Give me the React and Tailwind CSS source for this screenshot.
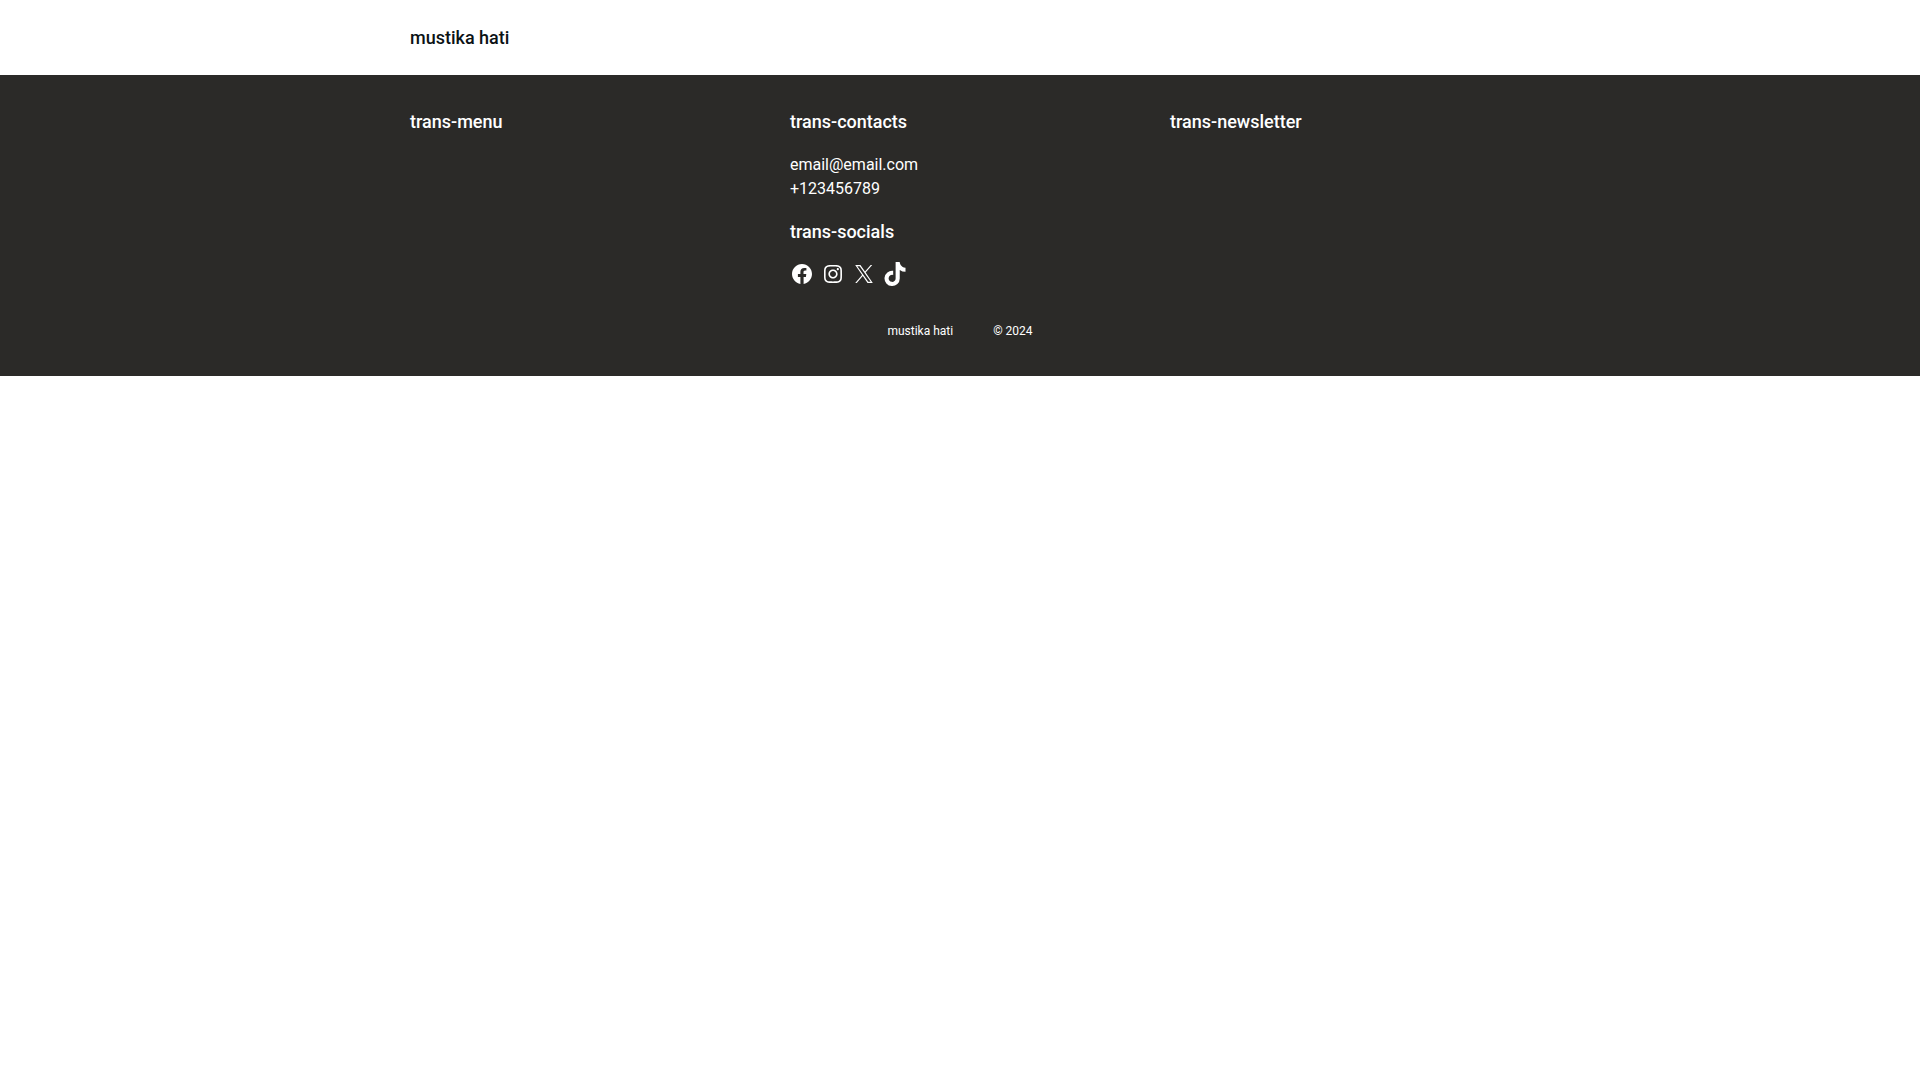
const ICONS = [
  {
    name: 'Facebook',
    viewBox: '0 0 24 24',
    size: 'size-6',
    path: 'M12 2C6.5 2 2 6.5 2 12c0 5 3.7 9.1 8.4 9.9v-7H7.9V12h2.5V9.8c0-2.5 1.5-3.9 3.8-3.9 1.1 0 2.2.2 2.2.2v2.5h-1.3c-1.2 0-1.6.8-1.6 1.6V12h2.8l-.4 2.9h-2.3v7C18.3 21.1 22 17 22 12c0-5.5-4.5-10-10-10z',
  },
  {
    name: 'Instagram',
    viewBox: '0 0 24 24',
    size: 'size-6',
    path: 'M12,4.622c2.403,0,2.688,0.009,3.637,0.052c0.877,0.04,1.354,0.187,1.671,0.31c0.42,0.163,0.72,0.358,1.035,0.673 c0.315,0.315,0.51,0.615,0.673,1.035c0.123,0.317,0.27,0.794,0.31,1.671c0.043,0.949,0.052,1.234,0.052,3.637 s-0.009,2.688-0.052,3.637c-0.04,0.877-0.187,1.354-0.31,1.671c-0.163,0.42-0.358,0.72-0.673,1.035 c-0.315,0.315-0.615,0.51-1.035,0.673c-0.317,0.123-0.794,0.27-1.671,0.31c-0.949,0.043-1.233,0.052-3.637,0.052 s-2.688-0.009-3.637-0.052c-0.877-0.04-1.354-0.187-1.671-0.31c-0.42-0.163-0.72-0.358-1.035-0.673 c-0.315-0.315-0.51-0.615-0.673-1.035c-0.123-0.317-0.27-0.794-0.31-1.671C4.631,14.688,4.622,14.403,4.622,12 s0.009-2.688,0.052-3.637c0.04-0.877,0.187-1.354,0.31-1.671c0.163-0.42,0.358-0.72,0.673-1.035 c0.315-0.315,0.615-0.51,1.035-0.673c0.317-0.123,0.794-0.27,1.671-0.31C9.312,4.631,9.597,4.622,12,4.622 M12,3 C9.556,3,9.249,3.01,8.289,3.054C7.331,3.098,6.677,3.25,6.105,3.472C5.513,3.702,5.011,4.01,4.511,4.511 c-0.5,0.5-0.808,1.002-1.038,1.594C3.25,6.677,3.098,7.331,3.054,8.289C3.01,9.249,3,9.556,3,12c0,2.444,0.01,2.751,0.054,3.711 c0.044,0.958,0.196,1.612,0.418,2.185c0.23,0.592,0.538,1.094,1.038,1.594c0.5,0.5,1.002,0.808,1.594,1.038 c0.572,0.222,1.227,0.375,2.185,0.418C9.249,20.99,9.556,21,12,21s2.751-0.01,3.711-0.054c0.958-0.044,1.612-0.196,2.185-0.418 c0.592-0.23,1.094-0.538,1.594-1.038c0.5-0.5,0.808-1.002,1.038-1.594c0.222-0.572,0.375-1.227,0.418-2.185 C20.99,14.751,21,14.444,21,12s-0.01-2.751-0.054-3.711c-0.044-0.958-0.196-1.612-0.418-2.185c-0.23-0.592-0.538-1.094-1.038-1.594 c-0.5-0.5-1.002-0.808-1.594-1.038c-0.572-0.222-1.227-0.375-2.185-0.418C14.751,3.01,14.444,3,12,3L12,3z M12,7.378 c-2.552,0-4.622,2.069-4.622,4.622S9.448,16.622,12,16.622s4.622-2.069,4.622-4.622S14.552,7.378,12,7.378z M12,15 c-1.657,0-3-1.343-3-3s1.343-3,3-3s3,1.343,3,3S13.657,15,12,15z M16.804,6.116c-0.596,0-1.08,0.484-1.08,1.08 s0.484,1.08,1.08,1.08c0.596,0,1.08-0.484,1.08-1.08S17.401,6.116,16.804,6.116z',
  },
  {
    name: 'X',
    viewBox: '0 0 1200 1227',
    size: 'size-[18px]',
    path: 'M714.163 519.284L1160.89 0H1055.03L667.137 450.887L357.328 0H0L468.492 681.821L0 1226.37H105.866L515.491 750.218L842.672 1226.37H1200L714.163 519.284ZM569.165 687.828L521.697 619.934L144.011 79.6944H306.615L611.412 515.685L658.88 583.579L1055.08 1150.3H892.476L569.165 687.854V687.828Z',
  },
  {
    name: 'TikTok',
    viewBox: '0 0 448 512',
    size: 'size-6',
    path: 'M448,209.91a210.06,210.06,0,0,1-122.77-39.25V349.38A162.55,162.55,0,1,1,185,188.31V278.2a74.62,74.62,0,1,0,52.23,71.18V0l88,0a121.18,121.18,0,0,0,1.86,22.17h0A122.18,122.18,0,0,0,381,102.39a121.43,121.43,0,0,0,67,20.14Z',
  },
];

function Heading({ children }) {
  return <h2 className="text-lg/[27px] font-medium">{children}</h2>;
}

function SocialLink({ icon }) {
  return (
    <a href="#" aria-label={icon.name} className="flex size-6 items-center justify-center">
      <svg viewBox={icon.viewBox} className={icon.size} fill="currentColor" aria-hidden="true">
        <path d={icon.path} />
      </svg>
    </a>
  );
}

export default function App() {
  return (
    <div className="min-h-screen bg-white font-['Roboto',sans-serif] text-base text-[#0b1215]">
      <header className="px-5 py-6">
        <div className="mx-auto max-w-[1100px]">
          <a href="#" className="block w-fit text-lg/[27px] font-medium">
            mustika hati
          </a>
        </div>
      </header>
      <footer className="bg-[#2b2a28] px-5 pt-[33px] pb-9 text-white">
        <div className="mx-auto grid max-w-[1100px] gap-10 md:grid-cols-3">
          <Heading>trans-menu</Heading>
          <div className="flex flex-col gap-[17px]">
            <section className="flex flex-col gap-[18px]">
              <Heading>trans-contacts</Heading>
              <address className="flex flex-col items-start not-italic">
                <a href="mailto:email@email.com">email@email.com</a>
                <a href="tel:+123456789">+123456789</a>
              </address>
            </section>
            <section className="flex flex-col gap-[17px]">
              <Heading>trans-socials</Heading>
              <nav aria-label="Socials" className="flex gap-[7px]">
                {ICONS.map((icon) => (
                  <SocialLink key={icon.name} icon={icon} />
                ))}
              </nav>
            </section>
          </div>
          <Heading>trans-newsletter</Heading>
        </div>
        <div className="mt-9 flex justify-center gap-10 text-xs/[18px]">
          <p>mustika hati</p>
          <p>© 2024</p>
        </div>
      </footer>
    </div>
  );
}
